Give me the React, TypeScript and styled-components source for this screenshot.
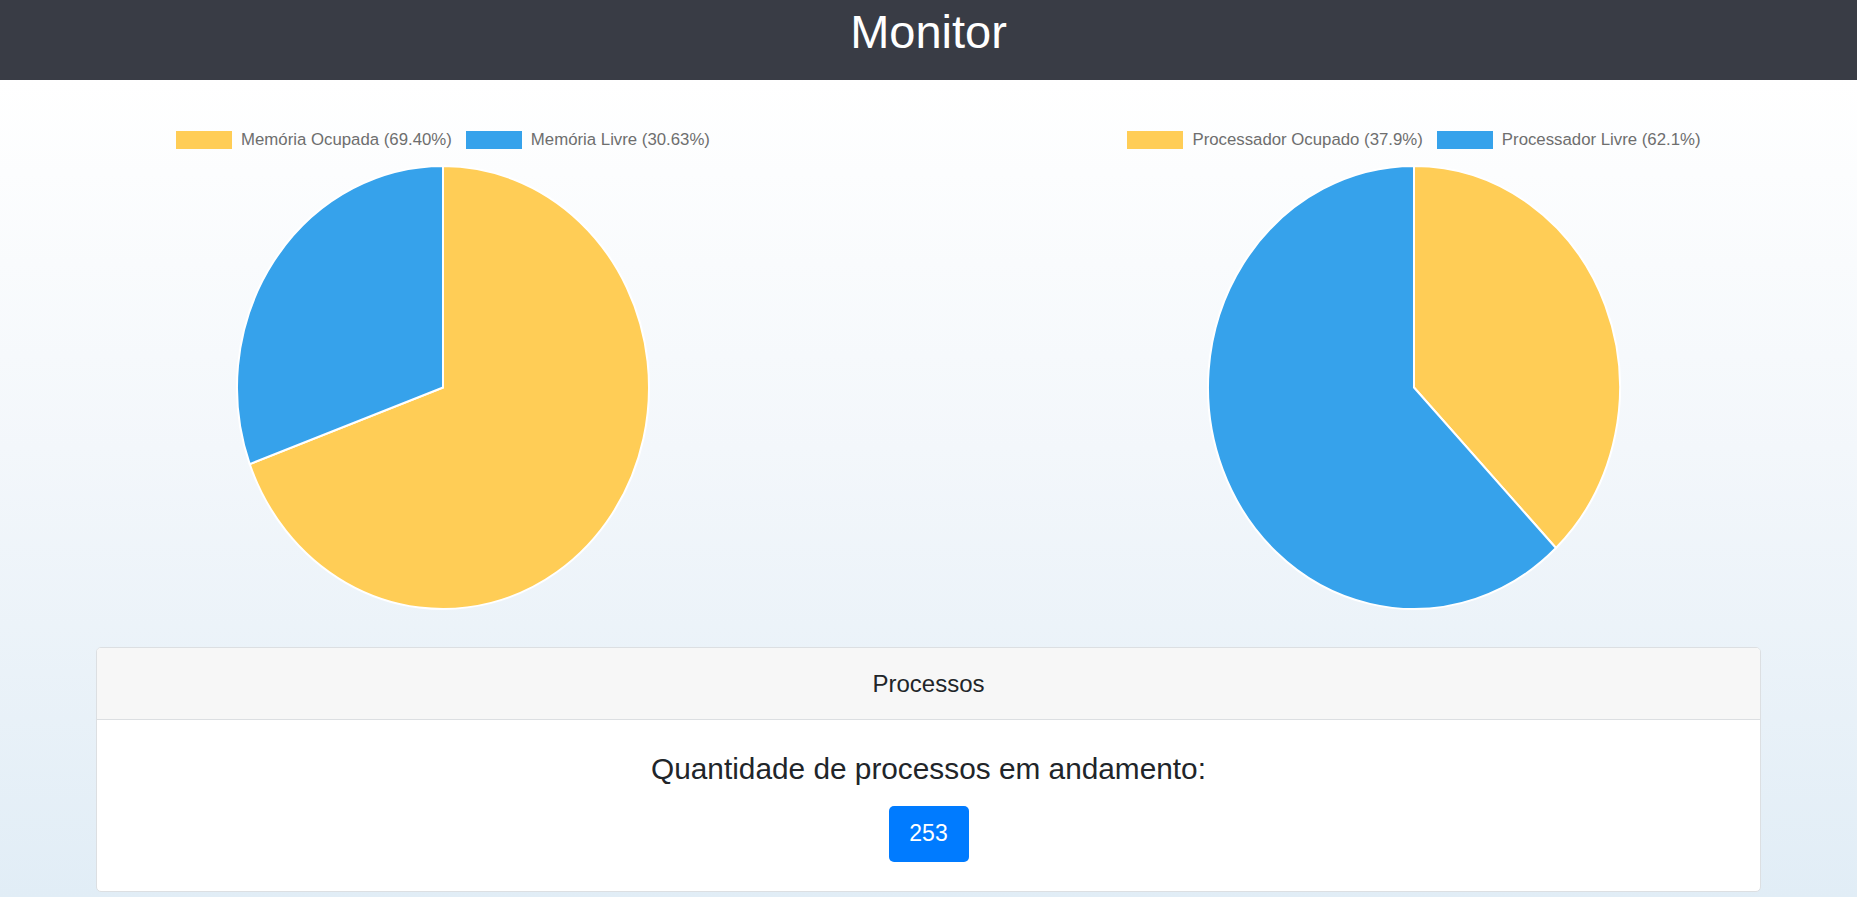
import styled, { createGlobalStyle } from "styled-components";

const GlobalStyle = createGlobalStyle`
  html, body {
    margin: 0;
    padding: 0;
  }
  body {
    font-family: "Liberation Sans", Arial, Helvetica, sans-serif;
    color: #212529;
    background: #e1edf6;
  }
`;

const Page = styled.div`
  min-height: 100vh;
  display: flex;
  flex-direction: column;
`;

const TopBar = styled.header`
  height: 80px;
  background-color: #393c45;
  display: flex;
  justify-content: center;
  align-items: flex-start;
  padding-top: 4px;
  box-sizing: border-box;
`;

const Title = styled.h1`
  margin: 0;
  color: #ffffff;
  font-size: 47px;
  font-weight: 400;
  line-height: 1.2;
`;

const Main = styled.main`
  flex: 1;
  background: linear-gradient(to bottom, #ffffff 0%, #f3f7fb 45%, #e1edf6 100%);
  padding: 51px 0 5px;
`;

const ChartsRow = styled.section`
  display: grid;
  grid-template-columns: 1fr 1fr;
  column-gap: 85px;
`;

const ChartBox = styled.div`
  display: flex;
  flex-direction: column;
  align-items: center;
`;

const Legend = styled.ul`
  list-style: none;
  margin: 0 0 17px;
  padding: 0;
  display: flex;
  gap: 14px;
`;

const LegendItem = styled.li`
  display: flex;
  align-items: center;
  gap: 9px;
  font-size: 16.8px;
  line-height: 18px;
  color: #6e6e6e;
`;

const Swatch = styled.span<{ $color: string }>`
  width: 56px;
  height: 18px;
  background-color: ${(p) => p.$color};
  display: inline-block;
`;

const PieSvg = styled.svg`
  width: 412px;
  height: 443px;
  overflow: visible;
  display: block;
`;

const Slice = styled.path`
  stroke: #ffffff;
  stroke-width: 2px;
  stroke-linejoin: miter;
`;

const Card = styled.section`
  margin: 38px 96px 0;
  background: #ffffff;
  border: 1px solid #dcdfe2;
  border-radius: 5px;
  overflow: hidden;
`;

const CardHeader = styled.div`
  background-color: #f7f7f7;
  border-bottom: 1px solid #dcdfe2;
  padding: 18px 20px;
  text-align: center;
  font-size: 24px;
  line-height: 35px;
  color: #212529;
`;

const CardBody = styled.div`
  padding: 31px 20px 29px;
  display: flex;
  flex-direction: column;
  align-items: center;
`;

const Question = styled.h4`
  margin: 0;
  font-size: 29.8px;
  font-weight: 400;
  line-height: 1.2;
  color: #212529;
`;

const CountButton = styled.button`
  margin-top: 19px;
  width: 80px;
  height: 56px;
  border: none;
  border-radius: 5px;
  background-color: #007bff;
  color: #ffffff;
  font-family: inherit;
  font-size: 23px;
  line-height: 1;
  cursor: pointer;
`;

type Slot = { label: string; value: number; color: string };

const YELLOW = "#ffcd56";
const BLUE = "#36a2eb";

function slicePaths(data: Slot[]) {
  const total = data.reduce((s, d) => s + d.value, 0);
  let start = -Math.PI / 2;
  return data.map((d) => {
    const angle = (d.value / total) * Math.PI * 2;
    const end = start + angle;
    const x1 = Math.cos(start);
    const y1 = Math.sin(start);
    const x2 = Math.cos(end);
    const y2 = Math.sin(end);
    const large = angle > Math.PI ? 1 : 0;
    const path = `M0 0 L${x1.toFixed(5)} ${y1.toFixed(5)} A1 1 0 ${large} 1 ${x2.toFixed(5)} ${y2.toFixed(5)} Z`;
    start = end;
    return { ...d, path };
  });
}

function PieChart({ data }: { data: Slot[] }) {
  const slices = slicePaths(data);
  return (
    <ChartBox>
      <Legend>
        {data.map((d) => (
          <LegendItem key={d.label}>
            <Swatch $color={d.color} />
            {d.label}
          </LegendItem>
        ))}
      </Legend>
      <PieSvg viewBox="-1 -1 2 2" preserveAspectRatio="none">
        {slices.map((s) => (
          <Slice
            key={s.label}
            d={s.path}
            fill={s.color}
            vectorEffect="non-scaling-stroke"
          />
        ))}
      </PieSvg>
    </ChartBox>
  );
}

const memory: Slot[] = [
  { label: "Memória Ocupada (69.40%)", value: 69.4, color: YELLOW },
  { label: "Memória Livre (30.63%)", value: 30.63, color: BLUE },
];

const cpu: Slot[] = [
  { label: "Processador Ocupado (37.9%)", value: 37.9, color: YELLOW },
  { label: "Processador Livre (62.1%)", value: 62.1, color: BLUE },
];

export default function App() {
  return (
    <Page>
      <GlobalStyle />
      <TopBar>
        <Title>Monitor</Title>
      </TopBar>
      <Main>
        <ChartsRow>
          <PieChart data={memory} />
          <PieChart data={cpu} />
        </ChartsRow>
        <Card>
          <CardHeader>Processos</CardHeader>
          <CardBody>
            <Question>Quantidade de processos em andamento:</Question>
            <CountButton>253</CountButton>
          </CardBody>
        </Card>
      </Main>
    </Page>
  );
}
